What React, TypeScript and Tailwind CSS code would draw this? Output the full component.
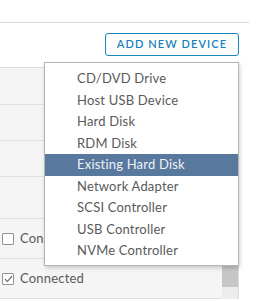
import { useState } from "react";

const DEVICES = [
  "CD/DVD Drive",
  "Host USB Device",
  "Hard Disk",
  "RDM Disk",
  "Existing Hard Disk",
  "Network Adapter",
  "SCSI Controller",
  "USB Controller",
  "NVMe Controller",
];

function Checkbox({ checked }: { checked?: boolean }) {
  return (
    <span className="w-[12px] h-[12px] border border-[#939393] rounded-[1px] bg-white flex items-center justify-center shrink-0">
      {checked && (
        <svg width="9" height="8" viewBox="0 0 9 8" fill="none">
          <path d="M1 4.2 L3.4 6.5 L8 1.2" stroke="#5b5b5b" strokeWidth="1.1" />
        </svg>
      )}
    </span>
  );
}

export default function App() {
  const [active] = useState("Existing Hard Disk");

  return (
    <div className="relative w-[265px] h-[301px] bg-white overflow-hidden font-['Lato','Liberation_Sans',sans-serif] text-[#5a5a5a]">
      <div className="h-[23px] w-[249px] border-b border-[#d9d9d9]" />

      <div className="w-[239px] flex justify-end pt-[10px]">
        <button className="h-[23px] w-[134px] border border-[#1a86c4] rounded-[3px] text-[11px] font-semibold tracking-[1.1px] text-[#1a7fba] uppercase">
          Add New Device
        </button>
      </div>

      <div className="mt-[11px] w-[239px] flex bg-[#f5f5f5] border-t border-r border-[#dcdcdc]">
        <div className="flex-1 flex flex-col text-[13px] tracking-[0.2px]">
          <div className="h-[37px] border-b border-[#e0e0e0]" />
          <div className="h-[36px] border-b border-[#e0e0e0]" />
          <div className="h-[36px] border-b border-[#e0e0e0]" />
          <div className="h-[42px] border-b border-[#e0e0e0]" />
          <div className="h-[40px] border-b border-[#e0e0e0] flex items-center gap-[6px] pl-[2px]">
            <Checkbox />
            <span>Connected</span>
          </div>
          <div className="h-[40px] border-b border-[#e0e0e0] flex items-center gap-[6px] pl-[2px]">
            <Checkbox checked />
            <span>Connected</span>
          </div>
        </div>
        <div className="w-[16px] flex flex-col bg-[#ececec]">
          <div className="mt-[112px] h-[107px] bg-[#c6c6c6]" />
        </div>
      </div>

      <div className="absolute left-[44px] top-[62px] w-[195px] bg-white border border-[#b5b5b5] shadow-[1px_2px_4px_rgba(0,0,0,0.18)] pt-[5px] pb-[3px] text-[13px] tracking-[0.2px]">
        {DEVICES.map((d) => (
          <div
            key={d}
            className={
              d === active
                ? "h-[21.5px] flex items-center pl-[32px] bg-[#58789e] text-[#eef2f7]"
                : "h-[21.5px] flex items-center pl-[32px]"
            }
          >
            {d}
          </div>
        ))}
      </div>
    </div>
  );
}
